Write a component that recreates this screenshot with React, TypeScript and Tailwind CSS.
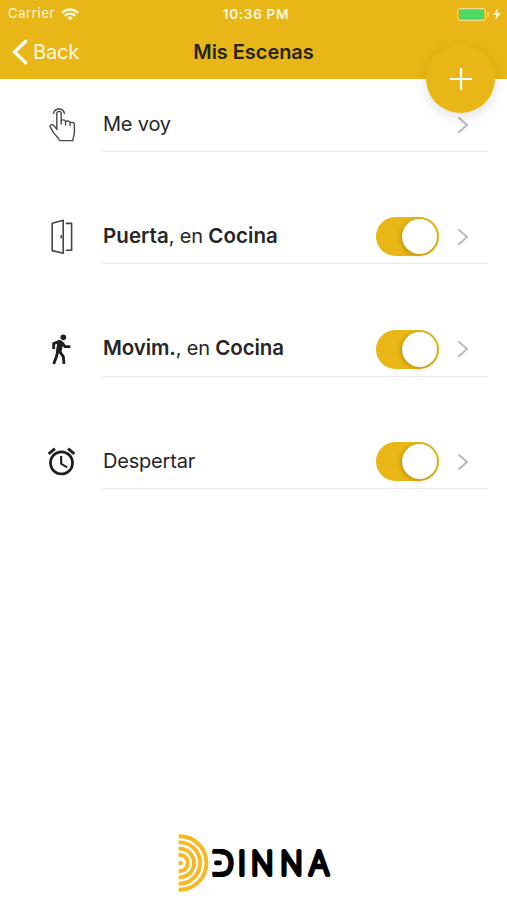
import type { ReactNode } from "react";
import { MdAlarm } from "react-icons/md";

type Scene = {
  id: string;
  icon: ReactNode;
  label: ReactNode;
  enabled?: boolean;
};

function TapIcon() {
  return (
    <svg
      width="28"
      height="36"
      viewBox="0 0 28 36"
      fill="none"
      stroke="#4a4a4a"
      strokeWidth="1.4"
      strokeLinecap="round"
      strokeLinejoin="round"
    >
      <path d="M5.6 6.4a5.5 5.5 0 0 1 10.8 0" />
      <path d="M8.8 22.5V6.6a2.2 2.2 0 0 1 4.4 0V17" />
      <path d="M13.2 13.4c2.6-1 4.4-.4 4.4 1.8V18M17.6 14.4c2.6-.9 4.4-.2 4.4 1.8v2.4M22 15.6c2.8-.8 4.4.2 4.4 2.6v7.4c0 3-1.4 4.2-1.6 8H11.6c-.6-3.6-4.6-4.6-6.6-8.8-1.2-2.6-3.2-4.2-3-5.8.3-2 3.2-1.8 4.6.4l2.2 2.9" />
    </svg>
  );
}

function DoorIcon() {
  return (
    <svg
      width="24"
      height="36"
      viewBox="0 0 24 36"
      fill="none"
      stroke="#444"
      strokeWidth="1.6"
      strokeLinejoin="round"
    >
      <path d="M2.2 4.2 13.2 1.2v33L2.2 31.6z" />
      <path d="M15.8 4.4h5.8v26.8h-5.8" />
      <path d="M11.2 16.2v3" />
    </svg>
  );
}

function WalkIcon() {
  return (
    <svg
      width="20"
      height="30.67"
      viewBox="37 24 60 92"
      fill="none"
      stroke="currentColor"
      strokeWidth="8.5"
      strokeLinejoin="round"
    >
      <circle cx="71" cy="34" r="8.5" fill="currentColor" stroke="none" />
      <path d="M42 69V53l17-7 9 5 8 11h16" />
      <path d="M55 46h10l4 8-6 27-13-2z" fill="currentColor" strokeWidth="3" />
      <path d="M54 76 51 90l-9 24" />
      <path d="m60 77 11 15 2 22" />
    </svg>
  );
}

const SCENES: Scene[] = [
  { id: "leave", icon: <TapIcon />, label: "Me voy" },
  {
    id: "door",
    icon: <DoorIcon />,
    label: (
      <>
        <b className="text-[20.5px] font-semibold tracking-[0.05px]">Puerta</b>, en{" "}
        <b className="text-[20.5px] font-semibold tracking-[0.05px]">Cocina</b>
      </>
    ),
    enabled: true,
  },
  {
    id: "motion",
    icon: <WalkIcon />,
    label: (
      <>
        <b className="text-[20.5px] font-semibold tracking-[-0.1px]">Movim.</b>, en{" "}
        <b className="text-[20.5px] font-semibold tracking-[-0.1px]">Cocina</b>
      </>
    ),
    enabled: true,
  },
  { id: "wake", icon: <MdAlarm size={33} />, label: "Despertar", enabled: true },
];

function Toggle() {
  return (
    <span className="mt-px flex h-[39px] w-[63px] items-center justify-end rounded-full bg-[#e8b616] pr-[2px]">
      <span className="size-[35px] rounded-full bg-white shadow-[-1px_1px_4px_rgba(90,60,0,0.35)]" />
    </span>
  );
}

function Chevron() {
  return (
    <svg width="12" height="18" viewBox="0 0 12 18" fill="none" stroke="#b9b9bb" strokeWidth="2">
      <path d="m1.5 1.5 8.5 7.5-8.5 7.5" />
    </svg>
  );
}

function SceneRow({ scene }: { scene: Scene }) {
  return (
    <li className="flex h-[55px]">
      <div className="flex w-[41px] items-center justify-center text-[#1e1e1e]">
        {scene.icon}
      </div>
      <div className="ml-[20px] flex flex-1 items-center border-b border-[#e9e9eb]">
        <span className="flex-1 pl-px text-[20px] tracking-[-0.2px] whitespace-nowrap text-[#262626]">
          {scene.label}
        </span>
        {scene.enabled && <Toggle />}
        <span className="mt-px mr-[19px] ml-[18px]">
          <Chevron />
        </span>
      </div>
    </li>
  );
}

function StatusBar() {
  return (
    <div className="grid h-[27px] grid-cols-3 items-center pt-px text-[13px] text-[#fff8e0]">
      <div className="flex items-center gap-[6px] pl-[8px]">
        <span className="tracking-[0.65px]">Carrier</span>
        <svg width="18" height="13" viewBox="0 0 18 13" fill="none" stroke="currentColor" strokeWidth="2.4">
          <path d="M1 4.8a11.5 11.5 0 0 1 16 0M3.8 7.8a7.4 7.4 0 0 1 10.4 0" />
          <path d="M6.2 9.8a4 4 0 0 1 5.6 0L9 12.6z" fill="currentColor" stroke="none" />
        </svg>
      </div>
      <span className="pl-[5px] text-center text-[13.5px] font-semibold tracking-[0.7px]">
        10:36 PM
      </span>
      <div className="flex items-center justify-end pr-[6px]">
        <span className="flex h-[13px] w-[29px] rounded-[3px] border border-[#f5dc8c] p-px">
          <span className="flex-1 rounded-[1px] bg-[#4cd964]" />
        </span>
        <span className="ml-px h-[5px] w-[2px] rounded-r bg-[#f5dc8c]" />
        <svg className="ml-[4px]" width="8" height="12" viewBox="0 0 8 12" fill="currentColor">
          <path d="M5.4 0 .2 6.8h3L2.4 12l5.4-7H4.6z" />
        </svg>
      </div>
    </div>
  );
}

function Header() {
  return (
    <header className="relative h-[79px] bg-[#e8b616]">
      <StatusBar />
      <div className="grid h-[50px] grid-cols-3 items-center text-[20px]">
        <button className="flex items-center gap-[5px] pl-[12px] tracking-[-0.2px] text-[#fff8e0]">
          <svg width="16" height="26" viewBox="0 0 16 26" fill="none" stroke="#fffdf5" strokeWidth="3.4" strokeLinecap="round">
            <path d="M13.6 2.2 2.6 13l11 10.8" />
          </svg>
          Back
        </button>
        <h1 className="text-center font-semibold tracking-[-0.05px] whitespace-nowrap text-[#272312]">
          Mis Escenas
        </h1>
      </div>
      <button
        aria-label="Añadir"
        className="absolute right-[12px] bottom-[-34px] flex size-[69px] items-center justify-center rounded-full bg-[#e8b616] shadow-[0_4px_14px_rgba(0,0,0,0.12)]"
      >
        <svg width="22" height="22" viewBox="0 0 22 22" stroke="#fff" strokeWidth="2.2">
          <path d="M11 0v22M0 11h22" />
        </svg>
      </button>
    </header>
  );
}

function Logo() {
  return (
    <svg width="160" height="60" viewBox="0 0 160 60">
      <g fill="none" stroke="#f8b723" strokeWidth="3.9">
        <path d="M1.6 3.2h1a26.8 26.8 0 0 1 0 53.6h-1" />
        <path d="M1.6 9.4h1a20.6 20.6 0 0 1 0 41.2h-1" />
        <path d="M1.6 15.6h1a14.4 14.4 0 0 1 0 28.8h-1" />
        <path d="M1.6 21.8h1a8.2 8.2 0 0 1 0 16.4h-1" />
      </g>
      <path d="M1.6 28h2.4a2 2 0 0 1 0 4H1.6z" fill="#f8b723" />
      <text
        transform="scale(0.9 1)"
        x="50.4 72 94.6 127.2 157.7"
        y="41.8"
        fontSize="33"
        textAnchor="middle"
        className="fill-black stroke-black font-['Lato'] font-light"
        strokeWidth="4.2"
        strokeLinejoin="round"
      >
        DINNA
      </text>
      {/* open the stem of the D and leave its bar */}
      <rect x="33" y="20.8" width="10.5" height="18" fill="#fff" />
      <rect x="37.2" y="27.6" width="7.6" height="4.6" rx="2" />
    </svg>
  );
}

export default function App() {
  return (
    <div className="flex h-[900px] w-[507px] flex-col bg-white font-['Inter',sans-serif]">
      <Header />
      <main className="flex-1">
        <ul className="flex flex-col gap-[57.4px] pt-[18px] pr-[19px] pl-[41px]">
          {SCENES.map((scene) => (
            <SceneRow key={scene.id} scene={scene} />
          ))}
        </ul>
      </main>
      <footer className="flex pb-[7px] pl-[177px]">
        <Logo />
      </footer>
    </div>
  );
}
